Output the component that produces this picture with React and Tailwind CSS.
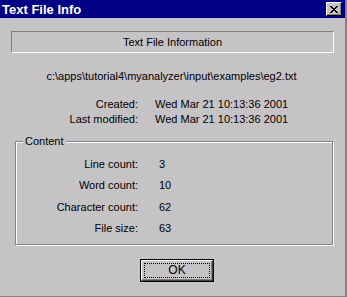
import React from 'react';

const font = { fontFamily: '"Liberation Sans", Arial, sans-serif' };

function InfoRow({ label, value }) {
    return (
        <div className="flex h-[15px] items-center leading-[13px]">
            <span className="w-[127px] text-right">{label}</span>
            <span className="ml-[17px]">{value}</span>
        </div>
    );
}

function CountRow({ label, value }) {
    return (
        <div className="flex h-[21.3px] items-center leading-[13px]">
            <span className="w-[121px] text-right">{label}</span>
            <span className="ml-[21px]">{value}</span>
        </div>
    );
}

export default function App() {
    return (
        <div
            className="w-[347px] h-[297px] bg-[#c6c3c6] border-r-2 border-b border-[#848284] text-[11px] text-black flex flex-col overflow-hidden"
            style={font}
        >
            {/* Title bar */}
            <div className="h-[18px] bg-[#000084] flex items-center justify-between pl-[2px] pr-[3px] shrink-0">
                <span className="text-white font-bold text-[13px] leading-[15px]">Text File Info</span>
                <button className="w-[16px] h-[14px] bg-[#c6c3c6] flex items-center justify-center border border-t-white border-l-white border-r-black border-b-black shadow-[inset_-1px_-1px_0_#848284]">
                    <svg width="8" height="7" viewBox="0 0 8 7" shapeRendering="crispEdges">
                        <path d="M0 0h2v1h-2zM6 0h2v1h-2zM1 1h2v1h-2zM5 1h2v1h-2zM2 2h4v1h-4zM3 3h2v1h-2zM2 4h4v1h-4zM1 5h2v1h-2zM5 5h2v1h-2zM0 6h2v1h-2zM6 6h2v1h-2z" fill="#000" />
                    </svg>
                </button>
            </div>

            {/* Body */}
            <div className="flex flex-col px-[11px]">
                <div className="mt-[13px] h-[22px] flex items-center justify-center border border-t-[#848284] border-l-[#848284] border-r-white border-b-white leading-[13px]">
                    Text File Information
                </div>

                <div className="mt-[17px] text-center leading-[13px] pr-[2px]">
                    c:\apps\tutorial4\myanalyzer\input\examples\eg2.txt
                </div>

                <div className="mt-[14px] flex flex-col">
                    <InfoRow label="Created:" value="Wed Mar 21 10:13:36 2001" />
                    <InfoRow label="Last modified:" value="Wed Mar 21 10:13:36 2001" />
                </div>

                {/* Content group */}
                <div className="relative mt-[14px] ml-[4px] mr-[1px] h-[104px] border border-[#848284] shadow-[inset_1px_1px_0_#fff,1px_1px_0_#fff] pt-[12px] pl-[1px]">
                    <span className="absolute -top-[7px] left-[7px] px-[2px] bg-[#c6c3c6] leading-[13px]">Content</span>
                    <CountRow label="Line count:" value="3" />
                    <CountRow label="Word count:" value="10" />
                    <CountRow label="Character count:" value="62" />
                    <CountRow label="File size:" value="63" />
                </div>

                <div className="mt-[14px] flex">
                    <button className="ml-[129px] w-[74px] h-[23px] border border-black p-0 bg-[#c6c3c6]">
                        <div className="w-full h-full border border-t-white border-l-white border-r-[#424142] border-b-[#424142] shadow-[inset_-1px_-1px_0_#848284] flex items-center justify-center p-[2px]">
                            <div className="w-full h-full border border-dotted border-black flex items-center justify-center leading-[13px] text-[12px]">
                                OK
                            </div>
                        </div>
                    </button>
                </div>
            </div>
        </div>
    );
}
